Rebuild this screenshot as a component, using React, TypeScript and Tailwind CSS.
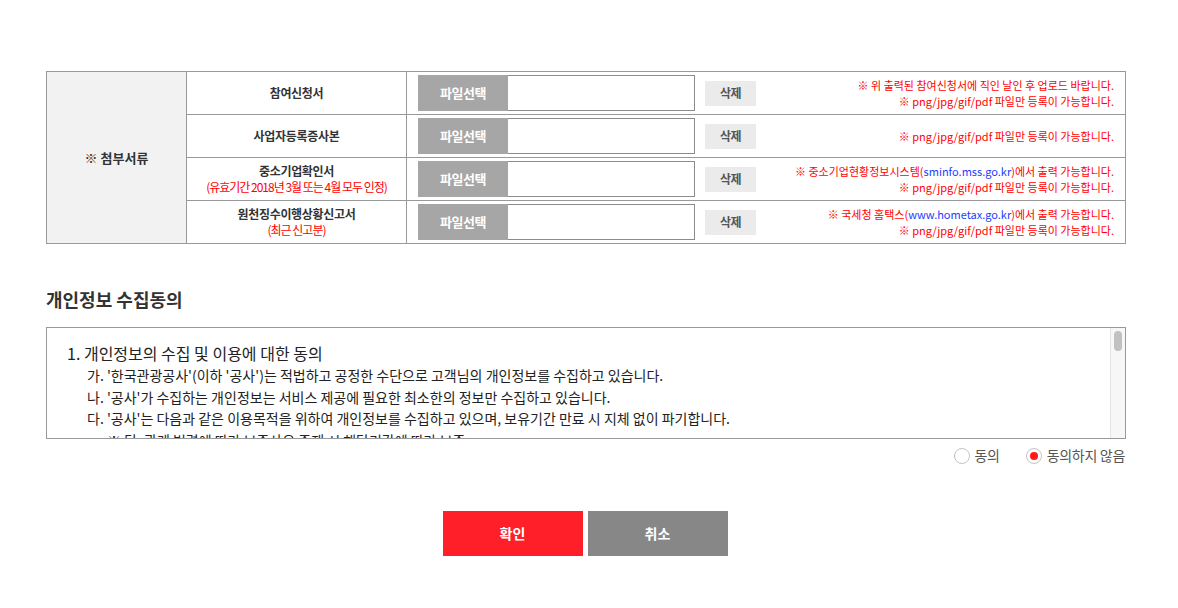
import { useState } from "react";

const font = { fontFamily: '"Noto Sans CJK KR", "Noto Sans", sans-serif' };

type Row = {
  label: string;
  sub?: string;
  notes: React.ReactNode[];
};

const rows: Row[] = [
  {
    label: "참여신청서",
    notes: [
      "※ 위 출력된 참여신청서에 직인 날인 후 업로드 바랍니다.",
      "※ png/jpg/gif/pdf 파일만 등록이 가능합니다.",
    ],
  },
  {
    label: "사업자등록증사본",
    notes: ["※ png/jpg/gif/pdf 파일만 등록이 가능합니다."],
  },
  {
    label: "중소기업확인서",
    sub: "(유효기간 2018년 3월 또는 4월 모두 인정)",
    notes: [
      <>
        ※ 중소기업현황정보시스템(<span className="text-[#1a3cff]">sminfo.mss.go.kr</span>)에서 출력 가능합니다.
      </>,
      "※ png/jpg/gif/pdf 파일만 등록이 가능합니다.",
    ],
  },
  {
    label: "원천징수이행상황신고서",
    sub: "(최근 신고분)",
    notes: [
      <>
        ※ 국세청 홈택스(<span className="text-[#1a3cff]">www.hometax.go.kr</span>)에서 출력 가능합니다.
      </>,
      "※ png/jpg/gif/pdf 파일만 등록이 가능합니다.",
    ],
  },
];

function FileInput() {
  return (
    <div className="flex h-[36px] w-[277px] border border-[#8c8c8c] bg-white">
      <button className="w-[90px] h-full -ml-px -my-px box-content py-px bg-[#a6a6a6] text-white text-[13px] font-bold tracking-[-0.5px]">
        파일선택
      </button>
      <div className="flex-1" />
    </div>
  );
}

function Radio({ checked, label, onClick }: { checked: boolean; label: string; onClick: () => void }) {
  return (
    <label className="flex items-center gap-[5px] cursor-pointer" onClick={onClick}>
      <span className="w-[16px] h-[16px] rounded-full border border-[#c4c4c4] bg-white flex items-center justify-center">
        {checked && <span className="w-[8px] h-[8px] rounded-full bg-[#ff1a1a]" />}
      </span>
      <span className="text-[14px] tracking-[-0.3px] text-[#555]">{label}</span>
    </label>
  );
}

export default function App() {
  const [agree, setAgree] = useState(false);

  return (
    <div className="min-h-screen bg-white text-[#333]" style={font}>
      <div className="w-[1080px] ml-[46px] pt-[71px]">
        <table className="w-full border-collapse border border-[#999]">
          <tbody>
            {rows.map((r, i) => (
              <tr key={i} className="h-[43px]">
                {i === 0 && (
                  <th
                    rowSpan={4}
                    className="w-[140px] bg-[#f2f2f2] border border-[#999] text-[13px] font-bold text-[#333]"
                  >
                    ※ 첨부서류
                  </th>
                )}
                <td className="w-[220px] border border-[#999] text-center leading-[16px]">
                  <div className="text-[12px] font-bold tracking-[-0.3px] text-[#333]">{r.label}</div>
                  {r.sub && <div className="text-[12px] tracking-[-1px] text-[#ff0000]">{r.sub}</div>}
                </td>
                <td className="border border-[#999] p-0">
                  <div className="flex items-center pl-[11px] pr-[11px]">
                    <FileInput />
                    <button className="ml-[10px] w-[51px] h-[25px] bg-[#ebebeb] text-[12px] font-bold text-[#555] tracking-[-0.5px]">
                      삭제
                    </button>
                    <div className="flex-1 text-right text-[11px] leading-[16px] -mt-px text-[#ff0000]">
                      {r.notes.map((n, j) => (
                        <div key={j}>{n}</div>
                      ))}
                    </div>
                  </div>
                </td>
              </tr>
            ))}
          </tbody>
        </table>

        <h2 className="mt-[42px] text-[18px] font-bold leading-[26px] text-[#333]">개인정보 수집동의</h2>

        <div className="mt-[15px] h-[112px] border border-[#999] flex overflow-hidden">
          <div className="flex-1 pl-[20px] pt-[13px] text-[#222]">
            <p className="text-[16px] leading-[24px]">1. 개인정보의 수집 및 이용에 대한 동의</p>
            <div className="pl-[20px] text-[14px] leading-[21.5px]">
              <p>가. '한국관광공사'(이하 '공사')는 적법하고 공정한 수단으로 고객님의 개인정보를 수집하고 있습니다.</p>
              <p>나. '공사'가 수집하는 개인정보는 서비스 제공에 필요한 최소한의 정보만 수집하고 있습니다.</p>
              <p>다. '공사'는 다음과 같은 이용목적을 위하여 개인정보를 수집하고 있으며, 보유기간 만료 시 지체 없이 파기합니다.</p>
              <p className="pl-[20px]">※ 단, 관계 법령에 따라 보존사유 존재 시 해당기간에 따라 보존</p>
            </div>
          </div>
          <div className="w-[15px] border-l border-[#e4e4e4] bg-[#f7f7f7] flex justify-center pt-[3px]">
            <div className="w-[8px] h-[20px] rounded-full bg-[#c1c1c1]" />
          </div>
        </div>

        <div className="mt-[6px] flex justify-end gap-[26px] pr-[1px]">
          <Radio checked={agree} label="동의" onClick={() => setAgree(true)} />
          <Radio checked={!agree} label="동의하지 않음" onClick={() => setAgree(false)} />
        </div>

        <div className="mt-[45px] flex justify-center gap-[5px] pr-[2px]">
          <button className="w-[140px] h-[45px] bg-[#ff1f28] text-white text-[14px] font-bold">확인</button>
          <button className="w-[140px] h-[45px] bg-[#878787] text-white text-[14px] font-bold">취소</button>
        </div>
      </div>
    </div>
  );
}
